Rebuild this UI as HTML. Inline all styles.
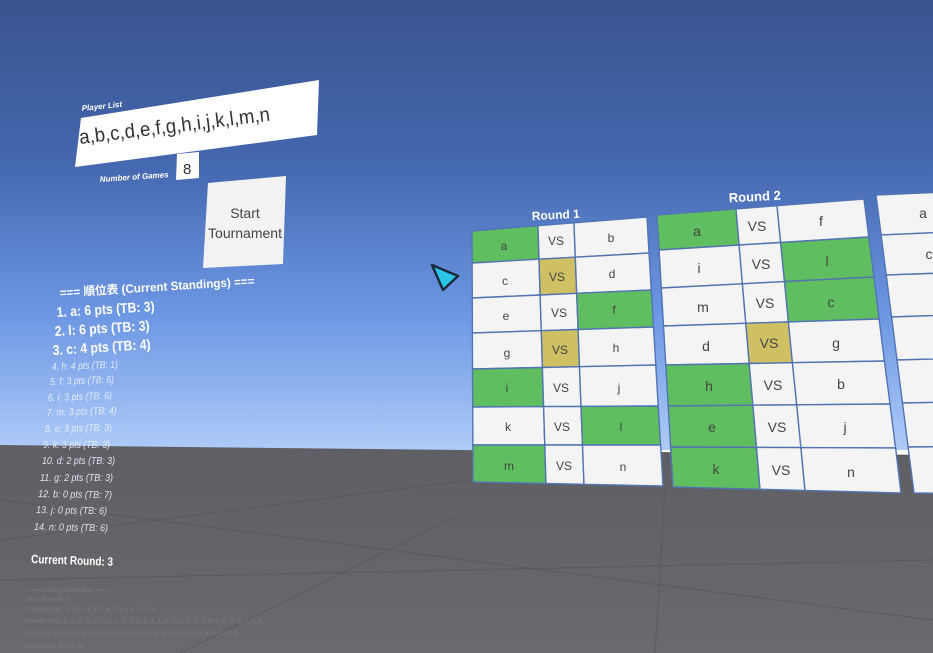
<!DOCTYPE html>
<html><head><meta charset="utf-8"><style>
html,body{margin:0;padding:0;width:933px;height:653px;overflow:hidden}
svg{display:block}
text{font-family:"Liberation Sans","Noto Sans CJK JP",sans-serif}
</style></head><body>
<svg id="s" width="933" height="653" viewBox="0 0 933 653" xmlns="http://www.w3.org/2000/svg">
<defs>
<linearGradient id="sky" x1="0" y1="0" x2="0" y2="1">
<stop offset="0" stop-color="#39558f"/>
<stop offset="0.35" stop-color="#4366ad"/>
<stop offset="0.7" stop-color="#6d97e4"/>
<stop offset="1" stop-color="#aecbf8"/>
</linearGradient>
<linearGradient id="gr" x1="0" y1="0" x2="0" y2="1">
<stop offset="0" stop-color="#5f5f63"/>
<stop offset="1" stop-color="#6a6a6e"/>
</linearGradient>
</defs>
<rect x="0" y="0" width="933" height="450" fill="url(#sky)"/>
<polygon points="0,445 933,455 933,653 0,653" fill="url(#gr)"/>
<g stroke="#58585c" stroke-width="1.2" fill="none" opacity="0.7">
<line x1="0" y1="540" x2="470" y2="480"/>
<line x1="0" y1="500" x2="933" y2="620"/>
<line x1="655" y1="653" x2="665" y2="490"/>
<line x1="180" y1="653" x2="470" y2="510"/>
<line x1="0" y1="580" x2="933" y2="560"/>
</g>
<g id="cells"></g>

<!-- Left panel -->
<polygon points="81,118 319,80 317,135 75,167" fill="#fff"/>
<text x="82" y="111" font-size="8" font-weight="bold" font-style="italic" fill="#fff" transform="rotate(-6 82 111)">Player List</text>
<text x="80" y="144" font-size="20" fill="#333" textLength="192" lengthAdjust="spacingAndGlyphs" transform="rotate(-7 80 144)">a,b,c,d,e,f,g,h,i,j,k,l,m,n</text>
<text x="100" y="182" font-size="8" font-weight="bold" font-style="italic" fill="#fff" transform="rotate(-4 100 182)">Number of  Games</text>
<polygon points="177,154 199,152 199,178 176,180" fill="#fff"/>
<text x="183" y="174" font-size="15" fill="#333">8</text>
<polygon points="208,183 286,176 283,264 203,268" fill="#f2f2f2"/>
<text x="245" y="218" font-size="14" fill="#444" text-anchor="middle">Start</text>
<text x="245" y="238" font-size="14" fill="#444" text-anchor="middle">Tournament</text>

<g fill="#fff" font-weight="bold">
<text x="60" y="297" font-size="12" textLength="195" lengthAdjust="spacingAndGlyphs" transform="rotate(-3.5 60 297)">=== 順位表 (Current Standings) ===</text>
<text x="57" y="317" font-size="14" textLength="98" lengthAdjust="spacingAndGlyphs" transform="rotate(-3.5 57 317)">1. a: 6 pts (TB: 3)</text>
<text x="55" y="336" font-size="14" textLength="95" lengthAdjust="spacingAndGlyphs" transform="rotate(-3.5 55 336)">2. l: 6 pts (TB: 3)</text>
<text x="53" y="355" font-size="14" textLength="98" lengthAdjust="spacingAndGlyphs" transform="rotate(-3.5 53 355)">3. c: 4 pts (TB: 4)</text>
</g>
<g fill="#eef2ff" font-size="10" font-style="italic" opacity="0.9" lengthAdjust="spacingAndGlyphs">
<text x="52" y="370" textLength="66" lengthAdjust="spacingAndGlyphs" transform="rotate(-2 52 370)">4. h: 4 pts (TB: 1)</text>
<text x="50" y="385" textLength="64" lengthAdjust="spacingAndGlyphs" transform="rotate(-2 50 385)">5. f: 3 pts (TB: 6)</text>
<text x="48" y="401" textLength="64" lengthAdjust="spacingAndGlyphs" transform="rotate(-2 48 401)">6. i: 3 pts (TB: 6)</text>
<text x="47" y="416" textLength="70" lengthAdjust="spacingAndGlyphs" transform="rotate(-2 47 416)">7. m: 3 pts (TB: 4)</text>
<text x="45" y="432" textLength="67" lengthAdjust="spacingAndGlyphs" transform="rotate(-1 45 432)">8. e: 3 pts (TB: 3)</text>
<text x="43" y="448" textLength="67" lengthAdjust="spacingAndGlyphs">9. k: 3 pts (TB: 3)</text>
<text x="42" y="464" textLength="73" lengthAdjust="spacingAndGlyphs">10. d: 2 pts (TB: 3)</text>
<text x="40" y="481" textLength="73" lengthAdjust="spacingAndGlyphs">11. g: 2 pts (TB: 3)</text>
<text x="38" y="497" textLength="74" lengthAdjust="spacingAndGlyphs" transform="rotate(1 38 497)">12. b: 0 pts (TB: 7)</text>
<text x="36" y="513" textLength="71" lengthAdjust="spacingAndGlyphs" transform="rotate(1 36 513)">13. j: 0 pts (TB: 6)</text>
<text x="34" y="530" textLength="74" lengthAdjust="spacingAndGlyphs" transform="rotate(1 34 530)">14. n: 0 pts (TB: 6)</text>
</g>
<text x="31" y="563" font-size="12" font-weight="bold" fill="#fff" textLength="82" lengthAdjust="spacingAndGlyphs" transform="rotate(2 31 563)">Current Round: 3</text>
<g fill="#8a8a90" font-size="6.5" opacity="0.55">
<text x="28" y="592">=== Debug Information ===</text>
<text x="27" y="601">Max Rounds: 8</text>
<text x="26" y="611">Players (14): a, b, c, d, e, f, g, h, i, j, k, l, m, n</text>
<text x="25" y="623">Results (56): 1, 3, 2, 3, 1, 2, 1, 1, 2, 2, 3, 1, 1, 1, 0, 0, 0, 0, 0, 0, 0, 0, 0, 0, 0, 0, 0, 0,</text>
<text x="24" y="635">0, 0, 0, 0, 0, 0, 0, 0, 0, 0, 0, 0, 0, 0, 0, 0, 0, 0, 0, 0, 0, 0, 0, 0, 0, 0, 0, 0, 0, 0,</text>
<text x="23" y="648">Timestamp: 20:37:00</text>
</g>

<text x="556" y="219" font-size="12" font-weight="bold" fill="#fff" text-anchor="middle" transform="rotate(-3 556 219)">Round 1</text>
<text x="755" y="201" font-size="13" font-weight="bold" fill="#fff" text-anchor="middle" transform="rotate(-3 755 201)">Round 2</text>

<g font-size="12" fill="#444" text-anchor="middle" dominant-baseline="central">
<text x="504" y="246">a</text><text x="556" y="241">VS</text><text x="611" y="238">b</text>
<text x="505" y="281">c</text><text x="557" y="277">VS</text><text x="612" y="274">d</text>
<text x="506" y="316">e</text><text x="559" y="313">VS</text><text x="614" y="310">f</text>
<text x="507" y="353">g</text><text x="560" y="350">VS</text><text x="616" y="348">h</text>
<text x="507" y="388">i</text><text x="561" y="388">VS</text><text x="619" y="388">j</text>
<text x="508" y="427">k</text><text x="562" y="427">VS</text><text x="621" y="427">l</text>
<text x="509" y="466">m</text><text x="564" y="466">VS</text><text x="623" y="467">n</text>
</g>
<g font-size="14" fill="#444" text-anchor="middle" dominant-baseline="central">
<text x="697" y="231">a</text><text x="757" y="226">VS</text><text x="821" y="221">f</text>
<text x="699" y="268">i</text><text x="761" y="264">VS</text><text x="827" y="261">l</text>
<text x="703" y="307">m</text><text x="765" y="303">VS</text><text x="831" y="302">c</text>
<text x="706" y="346">d</text><text x="769" y="343">VS</text><text x="836" y="343">g</text>
<text x="709" y="386">h</text><text x="773" y="385">VS</text><text x="841" y="384">b</text>
<text x="712" y="427">e</text><text x="777" y="427">VS</text><text x="845" y="427">j</text>
<text x="716" y="469">k</text><text x="781" y="470">VS</text><text x="851" y="472">n</text>
<text x="923" y="213">a</text><text x="929" y="254">c</text>
</g>

<polygon points="432,265 458,276 443,290" fill="#29c4e8" stroke="#1a2a3a" stroke-width="2.5" stroke-linejoin="round"/>
</svg>
<script>
(function(){
var NS="http://www.w3.org/2000/svg";
var cells=document.getElementById("cells");
function lerp(a,b,t){return a+(b-a)*t}
function grid(yL,yR,xT,xB,colors){
 var n=yL.length-1;
 function pt(i,j){
  var t=(yL[i]-yL[0])/(yL[n]-yL[0]);
  var x=lerp(xT[j],xB[j],t);
  var xl=lerp(xT[0],xB[0],t),xr=lerp(xT[xT.length-1],xB[xB.length-1],t);
  var s=(x-xl)/(xr-xl);
  return [x,lerp(yL[i],yR[i],s)];
 }
 for(var i=0;i<n;i++)for(var j=0;j<xT.length-1;j++){
  var p=[pt(i,j),pt(i,j+1),pt(i+1,j+1),pt(i+1,j)];
  var e=document.createElementNS(NS,"polygon");
  e.setAttribute("points",p.map(function(q){return q[0].toFixed(1)+","+q[1].toFixed(1)}).join(" "));
  var c=colors[i]&&colors[i][j]||"#f4f4f4";
  e.setAttribute("fill",c);
  e.setAttribute("stroke","#5274b2");e.setAttribute("stroke-width","1.4");
  cells.appendChild(e);
 }
}
var G="#5fbe5f",Y="#cfc064";
grid([231,263,298,333,369,407,445,482],[217,253,290,327,365,406,445,486],[472,538,574,647],[473,546,584,663],
 [[G],[0,Y],[0,0,G],[0,Y],[G],[0,0,G],[G]]);
grid([215,250,288,326,365,406,447,487],[199,237,277,319,361,404,448,493],[657,736,777,864],[673,760,805,901],
 [[G],[0,0,G],[0,0,G],[0,Y],[G],[G],[G]]);
grid([195,235,275,317,360,403,447,493],[190,230,271,313,357,401,446,494],[876,990],[914,1030],[]);
})();
</script>
</body></html>
